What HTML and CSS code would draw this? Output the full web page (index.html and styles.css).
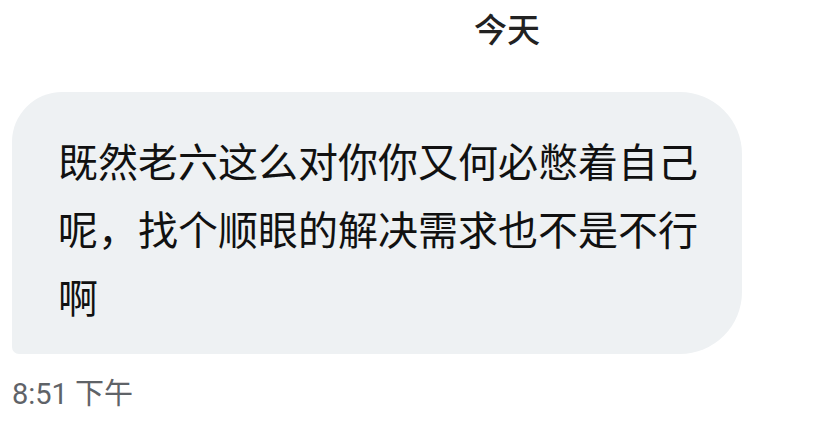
FILE: index.html
```html
<!DOCTYPE html>
<html lang="zh-CN">
<head>
    <meta charset="UTF-8">
    <meta name="viewport" content="width=device-width, initial-scale=1.0">
    <title>聊天</title>
    <link rel="stylesheet" href="styles.css">
</head>
<body>
    <div class="chat">
        <div class="day-label">今天</div>
        <div class="message">
            <div class="bubble">既然老六这么对你你又何必憋着自己呢，找个顺眼的解决需求也不是不行啊</div>
            <div class="time">8:51 下午</div>
        </div>
    </div>
</body>
</html>
```

FILE: styles.css
```css
body {
    font-family: "Noto Sans CJK SC", "Noto Sans", sans-serif;
    margin: 0;
    padding: 0;
    background-color: #fff;
}
.chat {
    display: flex;
    flex-direction: column;
    width: 830px;
    height: 445px;
    overflow: hidden;
}
.day-label {
    padding-left: 474px;
    padding-top: 6px;
    height: 50px;
    font-size: 33px;
    line-height: 44px;
    font-weight: 500;
    color: #222;
}
.message {
    padding-left: 12px;
    margin-top: 36px;
}
.bubble {
    width: 730px;
    box-sizing: border-box;
    padding: 34px 40px 24px 46px;
    background-color: #eef1f3;
    border-radius: 50px 62px 62px 7px;
    font-size: 40px;
    line-height: 68px;
    color: #111;
}
.time {
    margin-top: 22px;
    font-family: Roboto, "Noto Sans CJK SC", sans-serif;
    font-size: 29px;
    line-height: 36px;
    color: #5f6368;
}
```
